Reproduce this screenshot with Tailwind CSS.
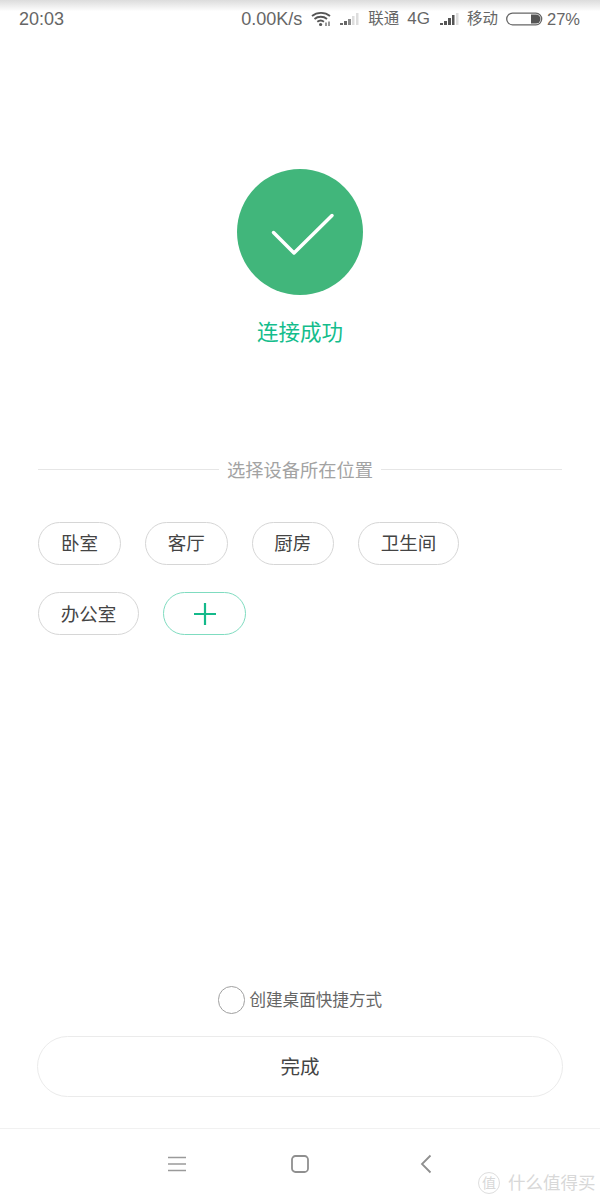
<!DOCTYPE html>
<html lang="zh">
<head>
<meta charset="utf-8">
<script src="https://cdn.jsdelivr.net/npm/@tailwindcss/browser@4"></script>
</head>
<body class="bg-white">
<div class="relative w-[600px] h-[1200px] overflow-hidden bg-white flex flex-col font-['Liberation_Sans','Noto_Sans_CJK_SC',sans-serif]">
  <!-- status bar -->
  <div class="h-[38px] shrink-0 flex items-center pl-[19px] pr-[20px] text-[#666] text-[18px] bg-gradient-to-b from-[#dcdcdc] via-white via-[30%] to-white">
    <span>20:03</span>
    <div class="ml-auto flex items-center">
      <span>0.00K/s</span>
      <svg class="ml-[9px]" width="21" height="16" viewBox="0 0 21 16" fill="none" stroke="#555" stroke-width="1.8"><path d="M1 5C6 .7 14 .7 19 5"/><path d="M3.500 8C7 5 12.500 5 16 8"/><path d="M6.300 10.800C8.300 9.200 11 9.200 13 10.800"/><circle cx="9.600" cy="13.500" r="1.600" fill="#555" stroke="none"/><path d="M15 11.500v3.500M18 10.500v4.500" stroke-width="1.200"/></svg>
      <svg class="ml-[8px]" width="20" height="14" viewBox="0 0 20 14"><rect x="0" y="11" width="3" height="2" fill="#666"/><rect x="4" y="9" width="3" height="4" fill="#666"/><rect x="8" y="7" width="3" height="6" fill="#888"/><rect x="12" y="4" width="2.500" height="9" fill="#ddd"/><rect x="16" y="1" width="2.500" height="12" fill="#ddd"/></svg>
      <span class="ml-[8px] text-[15.500px]">联通</span>
      <span class="ml-[8px] text-[17px]">4G</span>
      <svg class="ml-[10px]" width="20" height="14" viewBox="0 0 20 14"><rect x="0" y="11" width="3" height="2" fill="#555"/><rect x="4" y="9" width="3" height="4" fill="#555"/><rect x="8" y="6" width="3" height="7" fill="#555"/><rect x="12" y="3" width="2.500" height="10" fill="#555"/><rect x="16" y="1" width="2.500" height="12" fill="#ddd"/></svg>
      <span class="ml-[7px] text-[15.500px]">移动</span>
      <svg class="ml-[8px]" width="37" height="14" viewBox="0 0 37 14" fill="none"><rect x="0.700" y="1.200" width="35" height="11.600" rx="5.800" stroke="#666" stroke-width="1.300"/><path d="M25 2.500h5a4.500 4.500 0 0 1 0 9h-5z" fill="#555"/></svg>
      <span class="ml-[4px] text-[16.500px]">27%</span>
    </div>
  </div>

  <!-- main -->
  <div class="flex flex-col items-center pt-[131px]">
    <div class="w-[126px] h-[126px] rounded-full bg-[#41b67b] flex items-center justify-center">
      <svg width="126" height="126" viewBox="0 0 126 126" fill="none"><path d="M36.500 63.500L57 84L95 46.500" stroke="#fff" stroke-width="3.500" stroke-linecap="round" stroke-linejoin="round"/></svg>
    </div>
    <div class="mt-[24px] text-[21.500px] leading-[28px] text-[#14bd8c]">连接成功</div>
  </div>

  <div class="mt-[107px] mx-[38px] flex items-center gap-[8px]">
    <div class="flex-1 h-px bg-[#e6e6e6]"></div>
    <span class="pt-[4px] text-[18.250px] leading-[26px] text-[#a3a3a3]">选择设备所在位置</span>
    <div class="flex-1 h-px bg-[#e6e6e6]"></div>
  </div>

  <div class="mt-[38px] mx-[38px] flex flex-wrap gap-x-[24px] gap-y-[27px] text-[18.500px] text-[#444]">
    <div class="h-[43px] w-[83px] rounded-[22px] border border-[#d6d6d6] flex items-center justify-center">卧室</div>
    <div class="h-[43px] w-[82.500px] rounded-[22px] border border-[#d6d6d6] flex items-center justify-center">客厅</div>
    <div class="h-[43px] w-[82.500px] rounded-[22px] border border-[#d6d6d6] flex items-center justify-center">厨房</div>
    <div class="h-[43px] w-[101px] rounded-[22px] border border-[#d6d6d6] flex items-center justify-center">卫生间</div>
    <div class="h-[43px] w-[101px] rounded-[22px] border border-[#d6d6d6] flex items-center justify-center pt-[2px]">办公室</div>
    <div class="h-[43px] w-[83px] rounded-[22px] border border-[#7fdcc0] flex items-center justify-center">
      <svg width="22" height="22" viewBox="0 0 22 22"><path d="M0 11H22M11 0V22" stroke="#14b98a" stroke-width="2.200"/></svg>
    </div>
  </div>

  <div class="mt-auto flex flex-col">
    <div class="flex items-center justify-center gap-[4px]">
      <div class="w-[27.500px] h-[27.500px] rounded-full border-[1.500px] border-[#a0a0a0]"></div>
      <span class="text-[16.600px] leading-[26px] pt-[2px] text-[#666]">创建桌面快捷方式</span>
    </div>
    <div class="mt-[22px] mx-[37px] h-[61px] rounded-[31px] border border-[#ebebeb] flex items-center justify-center pt-[2px] text-[19.500px] text-[#444]">完成</div>
    <div class="mt-[31px] h-[72px] border-t border-[#f1f1f1] relative flex items-center pl-[168px] pb-[1px]">
      <svg width="18" height="16" viewBox="0 0 18 16" fill="none" stroke="#9a9a9a" stroke-width="1.700"><path d="M0 1.500H18M0 8H18M0 14.500H18"/></svg>
      <svg class="ml-[105px]" width="18" height="18" viewBox="0 0 18 18" fill="none"><rect x="1" y="1" width="16" height="16" rx="3.500" stroke="#8f8f8f" stroke-width="1.800"/></svg>
      <svg class="ml-[111px]" width="12" height="20" viewBox="0 0 12 20" fill="none"><path d="M10.500 1.500L2 10L10.500 18.500" stroke="#8f8f8f" stroke-width="1.800"/></svg>
      <!-- watermark -->
      <div class="absolute left-[478px] top-[42px] flex items-center gap-[8px] text-[#d8d8d8]">
        <div class="w-[22px] h-[22px] rounded-full border border-[#dedede] flex items-center justify-center text-[14px] leading-none">值</div>
        <span class="text-[17.500px] leading-[24px] whitespace-nowrap">什么值得买</span>
      </div>
    </div>
  </div>
</div>
</body>
</html>
